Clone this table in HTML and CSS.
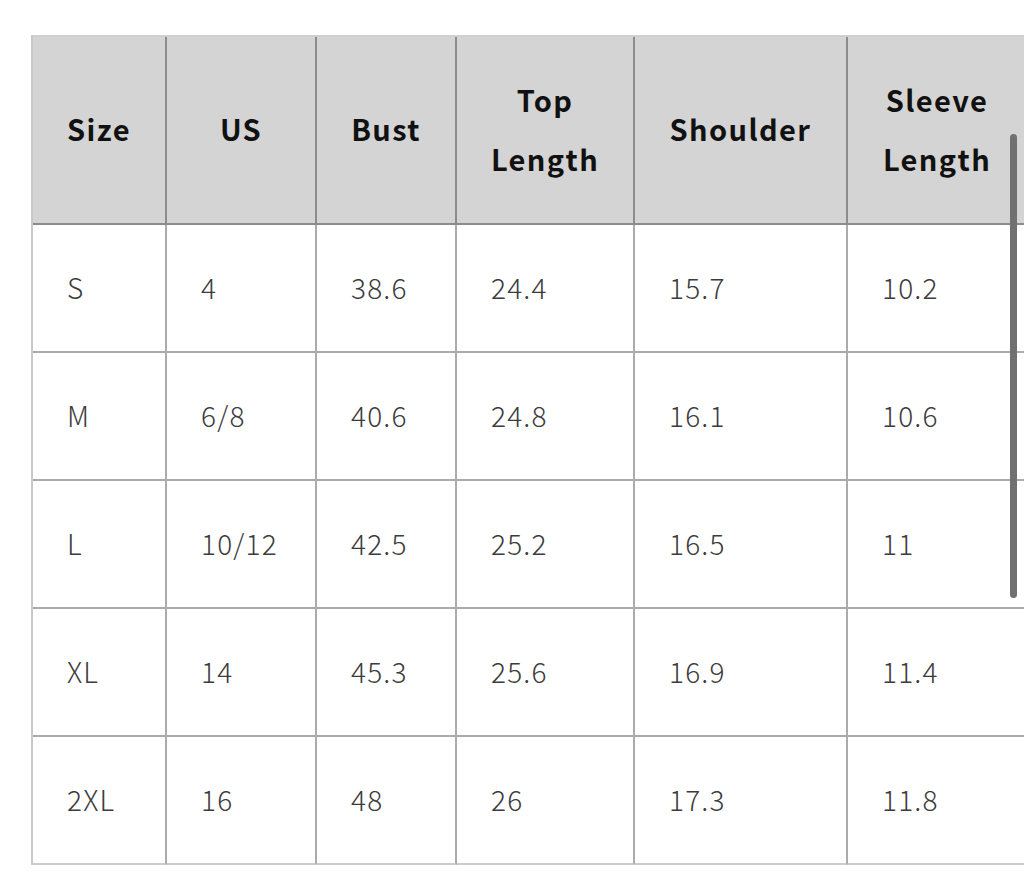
FILE: index.html
```html
<!DOCTYPE html>
<html>
<head>
<meta charset="utf-8">
<link rel="stylesheet" href="styles.css">
</head>
<body>
<div class="wrap">
  <table class="sizes">
    <thead>
      <tr>
        <th class="c1">Size</th>
        <th class="c2">US</th>
        <th class="c3">Bust</th>
        <th class="c4">Top<br>Length</th>
        <th class="c5">Shoulder</th>
        <th class="c6">Sleeve<br>Length</th>
      </tr>
    </thead>
    <tbody>
      <tr><td>S</td><td>4</td><td>38.6</td><td>24.4</td><td>15.7</td><td>10.2</td></tr>
      <tr><td>M</td><td>6/8</td><td>40.6</td><td>24.8</td><td>16.1</td><td>10.6</td></tr>
      <tr><td>L</td><td>10/12</td><td>42.5</td><td>25.2</td><td>16.5</td><td>11</td></tr>
      <tr><td>XL</td><td>14</td><td>45.3</td><td>25.6</td><td>16.9</td><td>11.4</td></tr>
      <tr><td>2XL</td><td>16</td><td>48</td><td>26</td><td>17.3</td><td>11.8</td></tr>
    </tbody>
  </table>
</div>
<div class="scrollbar"></div>
</body>
</html>
```
FILE: styles.css
```css
html, body {
  margin: 0;
  padding: 0;
  background: #ffffff;
  font-family: "Noto Sans CJK SC", "Source Sans Pro", "Noto Sans", sans-serif;
}
.wrap {
  margin: 35px 0 0 31px;
  width: 993px;
  overflow: hidden;
}
.sizes {
  border-collapse: separate;
  border-spacing: 0;
  table-layout: fixed;
  width: 997px;
  border-top: 2px solid #cfcfcf;
  border-left: 2px solid #c8c8c8;
}
.sizes th, .sizes td {
  box-sizing: border-box;
  padding: 0;
}
.sizes th {
  background: #d4d4d4;
  height: 188px;
  padding-bottom: 3px;
  border-right: 2px solid #8c8c8c;
  border-bottom: 2px solid #8c8c8c;
  font-size: 29px;
  font-weight: 700;
  line-height: 59px;
  letter-spacing: 1.4px;
  color: #111111;
  text-align: center;
  vertical-align: middle;
}
.sizes td {
  height: 128px;
  border-right: 2px solid #ababab;
  border-bottom: 2px solid #ababab;
  font-size: 28px;
  font-weight: 300;
  letter-spacing: 1.2px;
  color: #3c3c3c;
  padding-left: 34px;
  padding-bottom: 3px;
  text-align: left;
  vertical-align: middle;
}
.sizes tbody tr:last-child td {
  border-bottom-color: #cccccc;
}
.c1 { width: 134px; }
.c2 { width: 150px; }
.c3 { width: 140px; }
.c4 { width: 178px; }
.c5 { width: 213px; }
.c6 { width: 180px; }
.scrollbar {
  position: absolute;
  left: 1010px;
  top: 134px;
  width: 7px;
  height: 464px;
  border-radius: 4px;
  background: #707070;
}
```
